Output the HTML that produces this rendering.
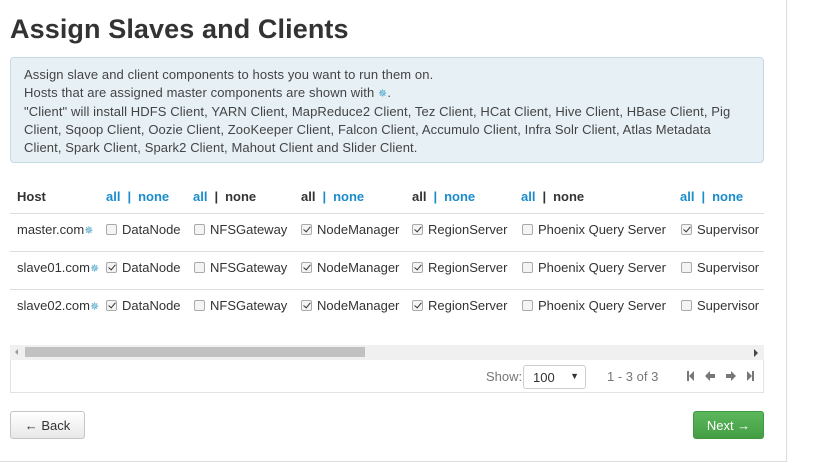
<!DOCTYPE html>
<html><head><meta charset="utf-8"><style>
*{box-sizing:border-box;margin:0;padding:0}
body{width:813px;height:463px;overflow:hidden;background:#fff;font-family:"Liberation Sans",sans-serif;color:#333;font-size:13px;position:relative}
.frame{position:absolute;left:-2px;top:-2px;width:789px;height:464px;border:1px solid #ddd;border-left:none;border-top:none}
h1{position:absolute;left:10px;top:14px;font-size:27px;font-weight:bold;color:#333;letter-spacing:0.1px}
.info{position:absolute;left:10px;top:57px;width:754px;height:106px;background:#e6f0f5;border:1px solid #c5d9e3;border-radius:4px;padding:8px 20px 8px 13px;line-height:18px;color:#444;font-size:13px;letter-spacing:0.1px}
.a{position:absolute;white-space:nowrap;font-size:13px}
.hd{font-weight:bold;top:189px}
.hd i{font-style:normal;padding:0 7px}
.blue{color:#1a8ccb}
.sep{position:absolute;left:10px;width:754px;height:1px;background:#ddd}
.cb{display:inline-block;width:11px;height:11px;border:1px solid #aaa;border-radius:2px;background:#f4f4f4;vertical-align:-1px;margin-right:5px;position:relative}
.cb.c::after{content:"";position:absolute;left:3px;top:0px;width:3px;height:6px;border:solid #333;border-width:0 1.5px 1.5px 0;transform:rotate(40deg)}
.star{color:#4aa3c8;font-size:11px}
.btn{position:absolute;top:411px;height:28px;border-radius:3px;font-size:13px;text-align:center;line-height:27px}
</style></head><body>
<div class="frame"></div>
<h1>Assign Slaves and Clients</h1>
<div class="info">Assign slave and client components to hosts you want to run them on.<br>Hosts that are assigned master components are shown with <span class="star">✵</span>.<br>"Client" will install HDFS Client, YARN Client, MapReduce2 Client, Tez Client, HCat Client, Hive Client, HBase Client, Pig<br>Client, Sqoop Client, Oozie Client, ZooKeeper Client, Falcon Client, Accumulo Client, Infra Solr Client, Atlas Metadata<br>Client, Spark Client, Spark2 Client, Mahout Client and Slider Client.</div>

<div class="a hd" style="left:17px">Host</div>
<div class="a hd" style="left:106px"><span class="blue">all</span><i class="blue">|</i><span class="blue">none</span></div>
<div class="a hd" style="left:193px"><span class="blue">all</span><i>|</i>none</div>
<div class="a hd" style="left:301px">all<i class="blue">|</i><span class="blue">none</span></div>
<div class="a hd" style="left:412px">all<i class="blue">|</i><span class="blue">none</span></div>
<div class="a hd" style="left:521px"><span class="blue">all</span><i>|</i>none</div>
<div class="a hd" style="left:680px"><span class="blue">all</span><i class="blue">|</i><span class="blue">none</span></div>

<div class="sep" style="top:213px"></div>
<div class="sep" style="top:251px"></div>
<div class="sep" style="top:289px"></div>

<div class="a" style="left:17px;top:222px">master.com<span class="star">✵</span></div>
<div class="a" style="left:106px;top:222px"><span class="cb"></span>DataNode</div>
<div class="a" style="left:194px;top:222px"><span class="cb"></span>NFSGateway</div>
<div class="a" style="left:301px;top:222px"><span class="cb c"></span>NodeManager</div>
<div class="a" style="left:412px;top:222px"><span class="cb c"></span>RegionServer</div>
<div class="a" style="left:522px;top:222px"><span class="cb"></span>Phoenix Query Server</div>
<div class="a" style="left:681px;top:222px"><span class="cb c"></span>Supervisor</div>

<div class="a" style="left:17px;top:260px">slave01.com<span class="star">✵</span></div>
<div class="a" style="left:106px;top:260px"><span class="cb c"></span>DataNode</div>
<div class="a" style="left:194px;top:260px"><span class="cb"></span>NFSGateway</div>
<div class="a" style="left:301px;top:260px"><span class="cb c"></span>NodeManager</div>
<div class="a" style="left:412px;top:260px"><span class="cb c"></span>RegionServer</div>
<div class="a" style="left:522px;top:260px"><span class="cb"></span>Phoenix Query Server</div>
<div class="a" style="left:681px;top:260px"><span class="cb"></span>Supervisor</div>

<div class="a" style="left:17px;top:298px">slave02.com<span class="star">✵</span></div>
<div class="a" style="left:106px;top:298px"><span class="cb c"></span>DataNode</div>
<div class="a" style="left:194px;top:298px"><span class="cb"></span>NFSGateway</div>
<div class="a" style="left:301px;top:298px"><span class="cb c"></span>NodeManager</div>
<div class="a" style="left:412px;top:298px"><span class="cb c"></span>RegionServer</div>
<div class="a" style="left:522px;top:298px"><span class="cb"></span>Phoenix Query Server</div>
<div class="a" style="left:681px;top:298px"><span class="cb"></span>Supervisor</div>

<div style="position:absolute;left:10px;top:345px;width:754px;height:15px;background:#f0f0f0"></div>
<div style="position:absolute;left:25px;top:347px;width:340px;height:10px;background:#c1c1c1"></div>
<div style="position:absolute;left:15px;top:349px;width:0;height:0;border-top:3px solid transparent;border-bottom:3px solid transparent;border-right:3px solid #999"></div>
<div style="position:absolute;left:754px;top:349px;width:0;height:0;border-top:4px solid transparent;border-bottom:4px solid transparent;border-left:4px solid #444"></div>
<div style="position:absolute;left:10px;top:360px;width:754px;height:33px;border:1px solid #e3e3e3;border-top:none"></div>
<div class="a" style="left:486px;top:369px;color:#777">Show:</div>
<div style="position:absolute;left:523px;top:365px;width:63px;height:24px;border:1px solid #ccc;border-radius:3px;font-size:13px;padding:4px 0 0 9px">100<span style="position:absolute;right:6px;top:5px;font-size:9px">▼</span></div>
<div class="a" style="left:607px;top:369px;color:#777">1 - 3 of 3</div>
<svg style="position:absolute;left:685px;top:370px" width="72" height="13" viewBox="0 0 72 13" fill="#777">
<rect x="2" y="1" width="2" height="10"/><path d="M4 6 L9 1 L9 11Z"/>
<path d="M20 6 L25 1 L25 4 L30 4 L30 8 L25 8 L25 11Z"/>
<path d="M51 6 L46 1 L46 4 L41 4 L41 8 L46 8 L46 11Z"/>
<rect x="67" y="1" width="2" height="10"/><path d="M67 6 L62 1 L62 11Z"/>
</svg>
<div class="btn" style="left:10px;width:75px;border:1px solid #c5c5c5;background:linear-gradient(#fff,#e8e8e8);color:#333">← Back</div>
<div class="btn" style="left:693px;width:71px;border:1px solid #3f9a3f;background:linear-gradient(#5cb85c,#449d44);color:#fff">Next →</div>
</body></html>
